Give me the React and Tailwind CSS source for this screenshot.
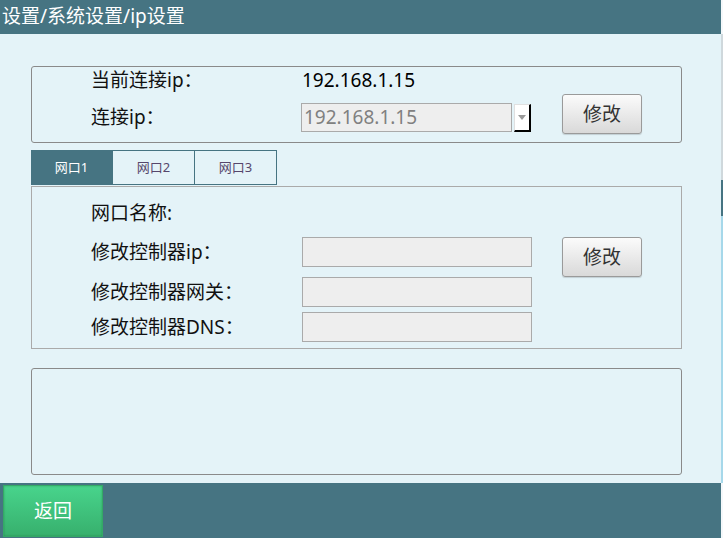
import React from "react";

const font = { fontFamily: '"Noto Sans", "Noto Sans CJK SC", sans-serif' };

function ModBtn({ className = "" }) {
  return (
    <button
      className={
        "w-[80px] h-[40px] shrink-0 rounded-[3px] border border-[#9a9a9a] bg-gradient-to-b from-[#fbfbfb] to-[#d9d9d9] text-[19px] text-[#333] leading-none shadow-[0_1px_1px_rgba(0,0,0,0.15)] " +
        className
      }
    >
      修改
    </button>
  );
}

export default function App() {
  return (
    <div className="w-[723px] h-[538px] flex overflow-hidden text-[19px] text-[#111]" style={font}>
      <div className="w-[721px] h-full flex flex-col bg-[#e4f3f8]">
        <div className="h-[34px] shrink-0 bg-[#467482] text-white text-[19px] flex items-center pl-[2px] leading-none pb-[1px]">
          设置/系统设置/ip设置
        </div>

        <div className="flex-1 flex flex-col pl-[31px] pr-[39px] pt-[32px]">
          {/* box 1 */}
          <div className="h-[77px] rounded-[3px] border border-[#8a8a8a] flex items-start pl-[59px]">
            <div className="flex flex-col">
              <div className="h-[26px] flex items-center leading-none">
                <span className="w-[211px]">当前连接ip：</span>
                <span className="text-black">192.168.1.15</span>
              </div>
              <div className="mt-[10px] h-[29px] flex items-center leading-none">
                <span className="w-[210px]">连接ip：</span>
                <div className="w-[211px] h-[29px] bg-[#eeeeee] border border-[#aaaaaa] flex items-center pl-[2px] text-[#808080]">
                  192.168.1.15
                </div>
                <div className="ml-[2px] w-[17px] h-[28px] bg-white border-t border-l border-[#e0e0e0] border-r-2 border-r-black border-b-2 border-b-black flex items-center justify-center">
                  <svg width="8" height="5" viewBox="0 0 8 5">
                    <path d="M0 0 L8 0 L4 5 Z" fill="#9a9a9a" />
                  </svg>
                </div>
              </div>
            </div>
            <ModBtn className="ml-[31px] mt-[27px] h-[39px]" />
          </div>

          {/* tabs */}
          <div className="mt-[7px] h-[35px] flex text-[13px] leading-none">
            <div className="w-[81px] h-full bg-[#467482] text-white flex items-center justify-center">网口1</div>
            <div className="w-[83px] h-full border border-[#467482] text-[#56466b] flex items-center justify-center">网口2</div>
            <div className="w-[82px] h-full border border-l-0 border-[#467482] text-[#56466b] flex items-center justify-center">网口3</div>
          </div>

          {/* box 2 */}
          <div className="mt-[1px] h-[163px] border border-[#aaaaaa] flex items-start pl-[59px] pt-[11px]">
            <div className="flex flex-col leading-none">
              <div className="h-[30px] flex items-center">网口名称:</div>
              <div className="mt-[9px] h-[30px] flex items-center">
                <span className="w-[211px]">修改控制器ip：</span>
                <div className="w-[230px] h-[30px] bg-[#eeeeee] border border-[#aaaaaa]" />
              </div>
              <div className="mt-[10px] h-[30px] flex items-center">
                <span className="w-[211px]">修改控制器网关：</span>
                <div className="w-[230px] h-[30px] bg-[#eeeeee] border border-[#aaaaaa]" />
              </div>
              <div className="mt-[5px] h-[30px] flex items-center">
                <span className="w-[211px]">修改控制器DNS：</span>
                <div className="w-[230px] h-[30px] bg-[#eeeeee] border border-[#aaaaaa]" />
              </div>
            </div>
            <ModBtn className="ml-[30px] mt-[39px]" />
          </div>

          {/* box 3 */}
          <div className="mt-[19px] h-[107px] rounded-[3px] border border-[#8a8a8a]" />
        </div>

        <div className="h-[55px] shrink-0 bg-[#467482] flex items-center pl-[3px]">
          <button className="w-[100px] h-[52px] mt-[1px] bg-gradient-to-b from-[#48d48c] to-[#37b06d] border border-[#34a866] shadow-[inset_0_0_2px_rgba(0,80,30,0.35)] text-white text-[19px] leading-none flex items-center justify-center">
            返回
          </button>
        </div>
      </div>
      <div className="w-[2px] h-full flex flex-col">
        <div className="h-[34px] bg-[#f4f8fa]" />
        <div className="h-[146px] bg-[#cfd8dc]" />
        <div className="h-[36px] bg-[#467482]" />
        <div className="h-[267px] bg-[#a6d8ea]" />
        <div className="flex-1 bg-[#f4f8fa]" />
      </div>
    </div>
  );
}
